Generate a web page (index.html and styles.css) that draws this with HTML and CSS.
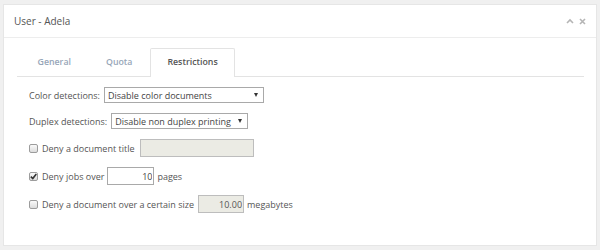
FILE: index.html
```html
<!DOCTYPE html>
<html lang="en">
<head>
    <meta charset="UTF-8">
    <title>User - Adela</title>
    <link rel="stylesheet" href="styles.css">
</head>
<body>
    <div class="panel">
        <div class="panel-header">
            <span class="panel-title">User - Adela</span>
            <div class="panel-tools">
                <svg width="8" height="6" viewBox="0 0 8 6"><path d="M1 5 L4 2 L7 5" fill="none" stroke="#b5b5b5" stroke-width="1.6"/></svg>
                <svg width="7" height="7" viewBox="0 0 7 7"><path d="M1 1 L6 6 M6 1 L1 6" fill="none" stroke="#b5b5b5" stroke-width="1.6"/></svg>
            </div>
        </div>
        <div class="panel-body">
            <div class="tabs">
                <div class="tab">General</div>
                <div class="tab">Quota</div>
                <div class="tab active">Restrictions</div>
            </div>
            <form class="restrictions">
                <div class="row">
                    <label for="color">Color detections:</label>
                    <div class="select-wrap select-color">
                        <select id="color"><option>Disable color documents</option></select>
                    </div>
                </div>
                <div class="row">
                    <label for="duplex">Duplex detections:</label>
                    <div class="select-wrap select-duplex">
                        <select id="duplex"><option>Disable non duplex printing</option></select>
                    </div>
                </div>
                <div class="row">
                    <span class="check"></span>
                    <span>Deny a document title</span>
                    <input type="text" class="field field-title" disabled>
                </div>
                <div class="row">
                    <span class="check checked">
                        <svg width="7" height="7" viewBox="0 0 7 7"><path d="M0.8 3.6 L2.8 5.6 L6.3 1" fill="none" stroke="#333" stroke-width="1.6"/></svg>
                    </span>
                    <span>Deny jobs over</span>
                    <input type="text" class="field field-num" value="10">
                    <span>pages</span>
                </div>
                <div class="row">
                    <span class="check"></span>
                    <span>Deny a document over a certain size</span>
                    <input type="text" class="field field-size" value="10.00" disabled>
                    <span>megabytes</span>
                </div>
            </form>
        </div>
    </div>
</body>
</html>
```

FILE: styles.css
```css
body {
    margin: 0;
    padding: 4px 3px;
    background-color: #f0f0f0;
    font-family: "Open Sans", Arial, sans-serif;
    color: #555;
}
.panel {
    background-color: #fff;
    border: 1px solid #e6e6e6;
    height: 242px;
    box-sizing: border-box;
}
.panel-header {
    height: 32px;
    border-bottom: 1px solid #ededed;
    display: flex;
    align-items: center;
    justify-content: space-between;
    padding: 0 10px;
}
.panel-title {
    font-size: 10px;
    color: #555;
}
.panel-tools {
    display: flex;
    align-items: center;
    gap: 5px;
}
.panel-body {
    padding: 10px 12px 0 13px;
}
.tabs {
    display: flex;
    padding-left: 3px;
    border-bottom: 1px solid #e3e3e3;
}
.tab {
    padding: 0 16.5px;
    height: 27px;
    line-height: 27px;
    font-size: 8.8px;
    font-weight: 600;
    color: #97a6b8;
    border: 1px solid transparent;
    border-bottom: none;
    margin-bottom: -1px;
}
.tab.active {
    color: #555;
    background-color: #fff;
    border-color: #e3e3e3;
    border-radius: 2px 2px 0 0;
    height: 28px;
}
.restrictions {
    margin-top: 10px;
    padding-left: 12px;
    font-size: 9px;
}
.row {
    display: flex;
    align-items: center;
    gap: 3px;
    margin-bottom: 10px;
}
label {
    margin-right: 1px;
}
.select-wrap {
    position: relative;
}
.select-wrap::after {
    content: "";
    position: absolute;
    right: 6px;
    top: 6px;
    border-left: 2.5px solid transparent;
    border-right: 2.5px solid transparent;
    border-top: 4px solid #333;
}
select {
    appearance: none;
    -webkit-appearance: none;
    font-family: "Open Sans", Arial, sans-serif;
    font-size: 9px;
    color: #444;
    background-color: #fff;
    border: 1px solid #a9a9a9;
    border-radius: 0;
    height: 16px;
    padding: 0 3px;
    margin: 0;
    display: block;
}
.select-color select {
    width: 160px;
}
.select-duplex select {
    width: 137px;
}
.check {
    width: 7px;
    height: 7px;
    border: 1px solid #9c9c9c;
    border-radius: 2px;
    background: linear-gradient(#fafafa, #dcdcdc);
    margin-right: 1px;
    display: flex;
    align-items: center;
    justify-content: center;
}
.field {
    font-family: "Open Sans", Arial, sans-serif;
    font-size: 9px;
    color: #444;
    height: 18px;
    box-sizing: border-box;
    border: 1px solid #bdbdbd;
    padding: 0 1px;
    margin: 0;
    text-align: right;
}
.field:disabled {
    background-color: #ebebe4;
    color: #555;
}
.field-title {
    width: 114px;
    margin-left: 2px;
}
.field-num {
    width: 47px;
    border-color: #a9a9a9;
}
.field-size {
    width: 46px;
    margin-left: 1px;
}
```
